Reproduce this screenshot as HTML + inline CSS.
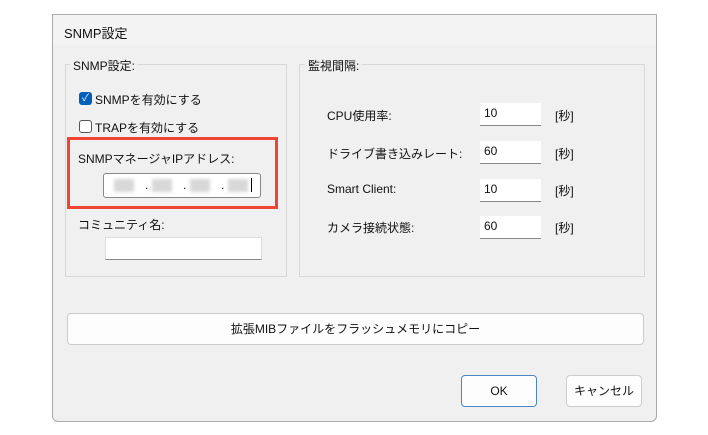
<!DOCTYPE html>
<html><head><meta charset="utf-8"><style>
body{margin:0;width:708px;height:435px;background:#fff;position:relative;overflow:hidden;font-family:"Liberation Sans","Noto Sans CJK JP",sans-serif;font-size:12px;color:#111}
.a{position:absolute}
.dlg{left:52px;top:14px;width:603px;height:406px;background:#f0f0f0;border:1px solid #aaa;border-radius:0 0 6px 6px}
.title{left:52px;top:14px;width:603px;height:31px;background:#f3f3f3;border:1px solid #aaa;border-bottom:none}
.grp{border:1px solid #d8d8d8}
.lbl{background:#f0f0f0;padding:0 3px}
.inp{background:#fff;border-bottom:1px solid #888}
.btn{background:#fdfdfd;border:1px solid #ccc;border-radius:4px;text-align:center}
.blur{background:#d8d8d8;filter:blur(1.5px);height:13px;width:20px;top:5px}
</style></head><body>
<div class="a dlg"></div>
<div class="a title"></div>
<div class="a" style="left:64px;top:23px;font-size:13px">SNMP設定</div>
<div class="a grp" style="left:65px;top:64px;width:220px;height:211px"></div>
<div class="a lbl" style="left:70px;top:57px">SNMP設定:</div>
<div class="a" style="left:79px;top:92px;width:13px;height:13px;background:#005fb8;border-radius:3px;color:#fff;font-size:10px;line-height:13px;text-align:center">✓</div>
<div class="a" style="left:95px;top:91px">SNMPを有効にする</div>
<div class="a" style="left:79px;top:120px;width:11px;height:11px;border:1px solid #555;border-radius:3px;background:#fff"></div>
<div class="a" style="left:95px;top:119px">TRAPを有効にする</div>
<div class="a" style="left:67px;top:137px;width:205px;height:66px;border:3px solid #f04432;background:#f0f0f0"></div>
<div class="a" style="left:78px;top:150px">SNMPマネージャIPアドレス:</div>
<div class="a" style="left:103px;top:173px;width:156px;height:23px;background:#fff;border:1px solid #888;border-radius:3px">
<div class="a blur" style="left:10px"></div><div class="a" style="left:41px;top:4px">.</div>
<div class="a blur" style="left:48px"></div><div class="a" style="left:79px;top:4px">.</div>
<div class="a blur" style="left:86px"></div><div class="a" style="left:117px;top:4px">.</div>
<div class="a blur" style="left:124px"></div>
<div class="a" style="left:147px;top:4px;width:1px;height:14px;background:#000"></div></div>
<div class="a" style="left:78px;top:216px">コミュニティ名:</div>
<div class="a inp" style="left:105px;top:237px;width:155px;height:21px;border:1px solid #ddd;border-bottom:1px solid #888"></div>
<div class="a grp" style="left:299px;top:64px;width:344px;height:211px"></div>
<div class="a lbl" style="left:305px;top:57px">監視間隔:</div>
<div class="a" style="left:327px;top:107px">CPU使用率:</div>
<div class="a" style="left:327px;top:145px">ドライブ書き込みレート:</div>
<div class="a" style="left:327px;top:182px">Smart Client:</div>
<div class="a" style="left:327px;top:219px">カメラ接続状態:</div>
<div class="a inp" style="left:480px;top:103px;width:61px;height:22px"><span class="a" style="left:4px;top:3px">10</span></div>
<div class="a inp" style="left:480px;top:141px;width:61px;height:22px"><span class="a" style="left:4px;top:3px">60</span></div>
<div class="a inp" style="left:480px;top:179px;width:61px;height:22px"><span class="a" style="left:4px;top:3px">10</span></div>
<div class="a inp" style="left:480px;top:216px;width:61px;height:22px"><span class="a" style="left:4px;top:3px">60</span></div>
<div class="a" style="left:555px;top:107px">[秒]</div>
<div class="a" style="left:555px;top:145px">[秒]</div>
<div class="a" style="left:555px;top:182px">[秒]</div>
<div class="a" style="left:555px;top:219px">[秒]</div>
<div class="a btn" style="left:67px;top:313px;width:575px;height:30px;line-height:30px">拡張MIBファイルをフラッシュメモリにコピー</div>
<div class="a btn" style="left:461px;top:375px;width:74px;height:30px;line-height:30px;border:1px solid #4a86c5">OK</div>
<div class="a btn" style="left:566px;top:375px;width:74px;height:30px;line-height:30px">キャンセル</div>
</body></html>
